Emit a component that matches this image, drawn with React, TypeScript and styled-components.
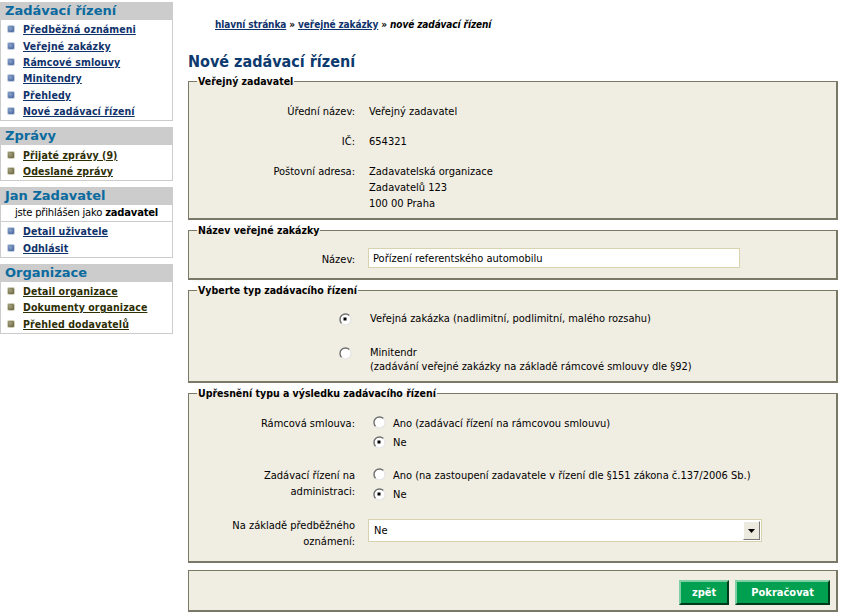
import React from 'react';
import styled, { createGlobalStyle } from 'styled-components';

const Global = createGlobalStyle`
  body {
    margin: 0;
    background: #ffffff;
    font-family: "DejaVu Sans Condensed", "DejaVu Sans", sans-serif;
    font-size: 11px;
    color: #000;
  }
`;

type MenuLink = { text: string };
type MenuBoxProps = { title: string, tone: 'blue' | 'olive', links: MenuLink[], note?: React.ReactNode };

const MenuBox = (props: MenuBoxProps) => {
    return (
        <Box>
            <BoxTitle>{props.title}</BoxTitle>
            {props.note && <Note>{props.note}</Note>}
            <List>
                {props.links.map(l => (
                    <Item key={l.text}>
                        <Bullet $tone={props.tone}/>
                        <MenuA href="#" $tone={props.tone}>{l.text}</MenuA>
                    </Item>
                ))}
            </List>
        </Box>
    );
};

type RadioProps = { checked?: boolean, top?: number };
const Radio = ({checked, top = 0}: RadioProps) => (
    <RadioDot $top={top}>
        <svg width="13" height="13" viewBox="0 0 13 13">
            <circle cx="6.5" cy="6.5" r="5.5" fill="#fff"/>
            <path d="M2.6 10.4 A5.5 5.5 0 0 1 10.4 2.6" stroke="#6f6f6f" strokeWidth="1.4" fill="none"/>
            <path d="M10.4 2.6 A5.5 5.5 0 0 1 2.6 10.4" stroke="#e4e4e4" strokeWidth="1.2" fill="none"/>
            {checked && <rect x="4.5" y="4.5" width="3" height="3" fill="#000"/>}
        </svg>
    </RadioDot>
);

export default function App() {
    return (
        <Page>
            <Global/>
            <Side>
                <MenuBox title="Zadávací řízení" tone="blue" links={[
                    {text: 'Předběžná oznámeni'}, {text: 'Veřejné zakázky'}, {text: 'Rámcové smlouvy'},
                    {text: 'Minitendry'}, {text: 'Přehledy'}, {text: 'Nové zadávací řízení'}]}/>
                <MenuBox title="Zprávy" tone="olive" links={[
                    {text: 'Přijaté zprávy (9)'}, {text: 'Odeslané zprávy'}]}/>
                <MenuBox title="Jan Zadavatel" tone="blue"
                         note={<>jste přihlášen jako <b>zadavatel</b></>}
                         links={[{text: 'Detail uživatele'}, {text: 'Odhlásit'}]}/>
                <MenuBox title="Organizace" tone="olive" links={[
                    {text: 'Detail organizace'}, {text: 'Dokumenty organizace'}, {text: 'Přehled dodavatelů'}]}/>
            </Side>
            <Main>
                <Crumbs>
                    <CrumbA href="#">hlavní stránka</CrumbA> » <CrumbA href="#">veřejné zakázky</CrumbA> » <i>nové zadávací řízení</i>
                </Crumbs>
                <Title>Nové zadávací řízení</Title>

                <Fieldset $h={145} $gap={4}>
                    <Legend>Veřejný zadavatel</Legend>
                    <Grid $top={17} $gap={14}>
                        <Label>Úřední název:</Label><Value>Veřejný zadavatel</Value>
                        <Label>IČ:</Label><Value>654321</Value>
                        <Label>Poštovní adresa:</Label>
                        <Value>Zadavatelská organizace<br/>Zadavatelů 123<br/>100 00 Praha</Value>
                    </Grid>
                </Fieldset>

                <Fieldset $h={56} $gap={4}>
                    <Legend>Název veřejné zakázky</Legend>
                    <Grid $top={12} $gap={0}>
                        <Label $pad={4}>Název:</Label>
                        <TextInput defaultValue="Pořízení referentského automobilu"/>
                    </Grid>
                </Fieldset>

                <Fieldset $h={99} $gap={4}>
                    <Legend>Vyberte typ zadávacího řízení</Legend>
                    <Choices>
                        <Choice><Radio checked top={1}/><span>Veřejná zakázka (nadlimitní, podlimitní, malého rozsahu)</span></Choice>
                        <Choice><Radio top={1}/><span>Minitendr<br/>(zadávání veřejné zakázky na základě rámcové smlouvy dle §92)</span></Choice>
                    </Choices>
                </Fieldset>

                <Fieldset $h={176} $gap={7}>
                    <Legend>Upřesnění typu a výsledku zadávacího řízení</Legend>
                    <Grid $top={17} $gap={17}>
                        <Label>Rámcová smlouva:</Label>
                        <Options>
                            <Option><Radio/><span>Ano (zadávací řízení na rámcovou smlouvu)</span></Option>
                            <Option><Radio checked top={1}/><span>Ne</span></Option>
                        </Options>
                        <Label>Zadávací řízení na<br/>administraci:</Label>
                        <Options>
                            <Option><Radio/><span>Ano (na zastoupení zadavatele v řízení dle §151 zákona č.137/2006 Sb.)</span></Option>
                            <Option><Radio checked top={1}/><span>Ne</span></Option>
                        </Options>
                        <Label $pad={-2}>Na základě předběžného<br/>oznámení:</Label>
                        <Select>
                            <span>Ne</span>
                            <Arrow>
                                <svg width="7" height="4" viewBox="0 0 7 4"><path d="M0 0h7L3.5 4z" fill="#000"/></svg>
                            </Arrow>
                        </Select>
                    </Grid>
                </Fieldset>

                <Actions>
                    <Button>zpět</Button>
                    <Button $wide>Pokračovat</Button>
                </Actions>
            </Main>
        </Page>
    );
}

const Page = styled.div`
  display: flex;
  align-items: flex-start;
  width: 842px;
  height: 616px;
  overflow: hidden;
`

const Side = styled.div`
  width: 173px;
  flex: none;
  padding-top: 2px;
  display: flex;
  flex-direction: column;
  gap: 6px;
`

const Box = styled.div`
  border: 1px solid #cccccc;
  border-top: none;
  background: #fff;
`

const BoxTitle = styled.div`
  background: #cccccc;
  color: #0b6a9e;
  font-family: "DejaVu Sans", sans-serif;
  font-weight: bold;
  font-size: 13px;
  line-height: 18px;
  padding-left: 4px;
`

const Note = styled.div`
  text-align: center;
  padding: 1px 0 1px;
  line-height: 14px;
  border-bottom: 1px solid #cccccc;
  font-family: "DejaVu Sans", sans-serif;
  font-size: 10px;
  letter-spacing: -0.2px;
`

const List = styled.ul`
  list-style: none;
  margin: 0;
  padding: 1px 0 1px 7px;
`

const Item = styled.li`
  display: flex;
  align-items: center;
  gap: 9px;
  height: 16.4px;
`

const Bullet = styled.span<{ $tone: 'blue' | 'olive' }>`
  width: 6px;
  height: 6px;
  border-radius: 1px;
  background: ${p => p.$tone === 'blue'
    ? 'radial-gradient(circle at 35% 35%, #8aa3cc, #3f5f96)'
    : 'radial-gradient(circle at 35% 35%, #a7a27e, #5f5a38)'};
  box-shadow: 0 0 0 1px ${p => p.$tone === 'blue' ? '#c3cee0' : '#d2cfba'};
`

const MenuA = styled.a<{ $tone: 'blue' | 'olive' }>`
  color: ${p => p.$tone === 'blue' ? '#10326a' : '#2e2e05'};
  font-family: "DejaVu Sans Condensed", "DejaVu Sans", sans-serif;
  font-weight: bold;
  font-size: 10.5px;
  letter-spacing: 0.1px;
`

const Main = styled.div`
  flex: 1;
  padding: 0 4px 0 15px;
`

const Crumbs = styled.div`
  padding: 19px 0 0 27px;
  font-family: "DejaVu Sans Condensed", "DejaVu Sans", sans-serif;
  font-size: 10px;
  font-weight: bold;
  line-height: 12px;
  letter-spacing: -0.1px;
  color: #000;
`

const CrumbA = styled.a`
  color: #10326a;
`

const Title = styled.h1`
  margin: 21px 0 3px 0;
  font-family: "DejaVu Sans Condensed", "DejaVu Sans", sans-serif;
  font-size: 16px;
  line-height: 20px;
  color: #0d3a6e;
`

const Fieldset = styled.fieldset<{ $h: number, $gap: number }>`
  margin: 0 0 ${p => p.$gap}px 0;
  padding: 0 8px;
  height: ${p => p.$h}px;
  box-sizing: border-box;
  background: #f0ede2;
  border: 1px solid #7a7866;
  border-right-width: 2px;
  border-bottom-width: 2px;
`

const Legend = styled.legend`
  padding: 0 1px;
  margin-left: 0;
  font-weight: bold;
  font-size: 10.5px;
  line-height: 12px;
  color: #000;
`

const Grid = styled.div<{ $top: number, $gap: number }>`
  display: grid;
  grid-template-columns: 158px 1fr;
  column-gap: 14px;
  row-gap: ${p => p.$gap}px;
  padding-top: ${p => p.$top}px;
  line-height: 16px;
`

const Label = styled.div<{ $pad?: number }>`
  text-align: right;
  margin-top: ${p => p.$pad || 0}px;
`

const Value = styled.div``

const TextInput = styled.input`
  width: 372px;
  height: 20px;
  box-sizing: border-box;
  border: 1px solid #d9d2ae;
  background: #fff;
  font-family: inherit;
  font-size: 11px;
  padding: 0 4px;
  margin-left: -1px;
`

const Choices = styled.div`
  display: flex;
  flex-direction: column;
  gap: 20px;
  padding: 16px 0 0 142px;
  line-height: 14px;
`

const Choice = styled.div`
  display: flex;
  align-items: flex-start;
  gap: 18px;
`

const RadioDot = styled.span<{ $top: number }>`
  display: inline-flex;
  flex: none;
  width: 13px;
  height: 13px;
  margin-top: ${p => p.$top}px;
`

const Options = styled.div`
  display: flex;
  flex-direction: column;
  gap: 3px;
  padding-left: 4px;
`

const Option = styled.div`
  display: flex;
  align-items: flex-start;
  gap: 7px;
  line-height: 16px;
`

const Select = styled.div`
  width: 394px;
  height: 23px;
  box-sizing: border-box;
  display: flex;
  align-items: center;
  justify-content: space-between;
  background: #fff;
  border: 1px solid #d9d2ae;
  padding: 0 1px 0 5px;
  margin: -1px 0 0 -1px;
`

const Arrow = styled.span`
  width: 15px;
  height: 17px;
  display: flex;
  align-items: center;
  justify-content: center;
  background: #ece9df;
  border: 1px solid;
  border-color: #fff #777 #777 #fff;
`

const Actions = styled.div`
  height: 42px;
  box-sizing: border-box;
  display: flex;
  justify-content: flex-end;
  align-items: flex-start;
  gap: 6px;
  padding: 9px 6px 0 0;
  background: #f0ede2;
  border: 1px solid #7a7866;
  border-right-width: 2px;
  border-bottom-width: 2px;
`

const Button = styled.button<{ $wide?: boolean }>`
  height: 25px;
  padding: 0 ${p => p.$wide ? 14 : 11}px;
  background: #00a050;
  color: #fff;
  font-family: "DejaVu Sans Condensed", "DejaVu Sans", sans-serif;
  font-weight: bold;
  font-size: 11px;
  border: 2px solid;
  border-color: #7fcfa5 #003a1a #003a1a #7fcfa5;
`
